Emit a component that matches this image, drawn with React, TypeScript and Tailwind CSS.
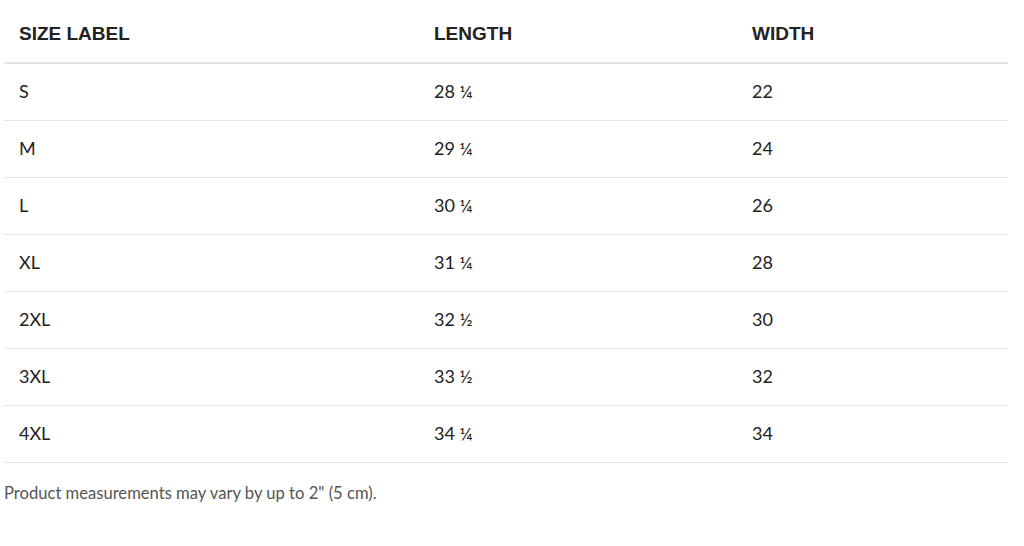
// Size chart table
const rows = [
  { size: "S", length: "28 ¼", width: "22" },
  { size: "M", length: "29 ¼", width: "24" },
  { size: "L", length: "30 ¼", width: "26" },
  { size: "XL", length: "31 ¼", width: "28" },
  { size: "2XL", length: "32 ½", width: "30" },
  { size: "3XL", length: "33 ½", width: "32" },
  { size: "4XL", length: "34 ¼", width: "34" },
];

export default function App() {
  return (
    <div className="w-[1024px] h-[546px] bg-white pt-1 pl-1 pr-4 font-['Lato',sans-serif] text-[#222]">
      <table className="w-[1004px] table-fixed border-collapse">
        <colgroup>
          <col className="w-[415px]" />
          <col className="w-[318px]" />
          <col />
        </colgroup>
        <thead>
          <tr className="border-b-2 border-[#e3e3e3]">
            {["SIZE LABEL", "LENGTH", "WIDTH"].map((h) => (
              <th
                key={h}
                className="h-[59px] pl-[15px] pt-[3px] text-left align-middle font-['Liberation_Sans',sans-serif] text-[19px] font-bold text-[#222]"
              >
                {h}
              </th>
            ))}
          </tr>
        </thead>
        <tbody>
          {rows.map((r) => (
            <tr key={r.size} className="border-b border-[#e6e6e6]">
              <td className="h-[57px] pl-[15px] align-middle text-[18px]">{r.size}</td>
              <td className="h-[57px] pl-[15px] align-middle text-[18px]">{r.length}</td>
              <td className="h-[57px] pl-[15px] align-middle text-[18px]">{r.width}</td>
            </tr>
          ))}
        </tbody>
      </table>
      <p className="mt-5 text-[16.6px] leading-5 text-[#555]">
        Product measurements may vary by up to 2" (5 cm).
      </p>
    </div>
  );
}
